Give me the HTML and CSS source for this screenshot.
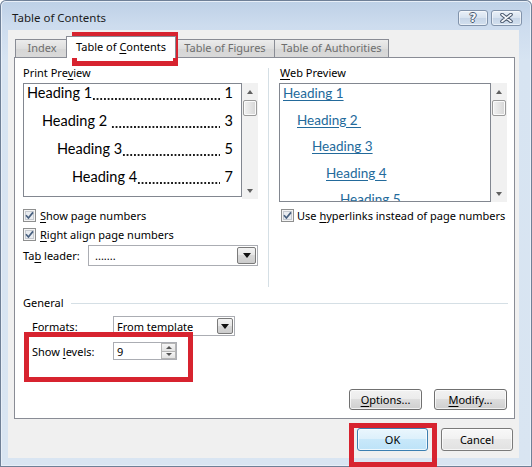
FILE: index.html
```html
<!DOCTYPE html>
<html>
<head>
<meta charset="utf-8">
<link rel="stylesheet" href="styles.css">
</head>
<body>
<div class="window">
  <div class="titlebar">
    <span class="title">Table of Contents</span>
    <div class="caption-btns">
      <div class="cbtn help"><span class="q">?</span></div>
      <div class="cbtn close">
        <svg width="13" height="10" viewBox="0 0 13 10"><path d="M2 1.5 L11 8.5 M11 1.5 L2 8.5" stroke="#46556b" stroke-width="3.6" stroke-linecap="round"/><path d="M2 1.5 L11 8.5 M11 1.5 L2 8.5" stroke="#f6f8fb" stroke-width="1.6" stroke-linecap="round"/></svg>
      </div>
    </div>
  </div>
  <div class="client">
    <div class="tabs">
      <div class="tab t-index">Index</div>
      <div class="tab active t-toc">Table of <u>C</u>ontents</div>
      <div class="tab t-fig">Table of Figures</div>
      <div class="tab t-auth">Table of Authorities</div>
    </div>
    <div class="panel">
      <div class="top">
        <div class="col-left">
          <div class="lbl">Print Pre<u>v</u>iew</div>
          <div class="pv-row">
            <div class="pbox print">
              <div class="toc-line"><span>Heading 1</span><span class="dots"></span><span class="num">1</span></div>
              <div class="toc-line i1"><span>Heading 2&nbsp;</span><span class="dots"></span><span class="num">3</span></div>
              <div class="toc-line i2"><span>Heading 3</span><span class="dots"></span><span class="num">5</span></div>
              <div class="toc-line i3"><span>Heading 4</span><span class="dots"></span><span class="num">7</span></div>
            </div>
            <div class="sbar s-print">
              <div class="sarrow"><span class="tri-up"></span></div>
              <div class="thumb"></div>
              <div class="sfill"></div>
              <div class="sarrow"><span class="tri-down"></span></div>
            </div>
          </div>
          <div class="chk first">
            <svg class="cb" width="13" height="13" viewBox="0 0 13 13"><rect x="0.5" y="0.5" width="12" height="12" fill="#f4f4f4" stroke="#8e8f8f"/><rect x="2.5" y="2.5" width="8" height="8" fill="#e9ecf0" stroke="#c5c9cf"/><path d="M3 6.3 L5.4 9 L10 3.4" fill="none" stroke="#48607f" stroke-width="1.7"/></svg>
            <span><u>S</u>how page numbers</span>
          </div>
          <div class="chk">
            <svg class="cb" width="13" height="13" viewBox="0 0 13 13"><rect x="0.5" y="0.5" width="12" height="12" fill="#f4f4f4" stroke="#8e8f8f"/><rect x="2.5" y="2.5" width="8" height="8" fill="#e9ecf0" stroke="#c5c9cf"/><path d="M3 6.3 L5.4 9 L10 3.4" fill="none" stroke="#48607f" stroke-width="1.7"/></svg>
            <span><u>R</u>ight align page numbers</span>
          </div>
          <div class="leader">
            <span class="leader-l">Ta<u>b</u> leader:</span>
            <div class="combo c-leader">
              <span>.......</span>
              <div class="drop"><span class="tri-down dark"></span></div>
            </div>
          </div>
        </div>
        <div class="vsep"></div>
        <div class="col-right">
          <div class="lbl"><u>W</u>eb Preview</div>
          <div class="pv-row">
            <div class="pbox web">
              <div class="web-line"><span class="lnk">Heading 1</span></div>
              <div class="web-line w1"><span class="lnk">Heading 2&nbsp;</span></div>
              <div class="web-line w2"><span class="lnk">Heading 3</span></div>
              <div class="web-line w3"><span class="lnk">Heading 4</span></div>
              <div class="web-line w4"><span class="lnk">Heading 5</span></div>
            </div>
            <div class="sbar s-web">
              <div class="sarrow"><span class="tri-up"></span></div>
              <div class="thumb"></div>
              <div class="sfill"></div>
              <div class="sarrow"><span class="tri-down"></span></div>
            </div>
          </div>
          <div class="chk first right">
            <svg class="cb" width="13" height="13" viewBox="0 0 13 13"><rect x="0.5" y="0.5" width="12" height="12" fill="#f4f4f4" stroke="#8e8f8f"/><rect x="2.5" y="2.5" width="8" height="8" fill="#e9ecf0" stroke="#c5c9cf"/><path d="M3 6.3 L5.4 9 L10 3.4" fill="none" stroke="#48607f" stroke-width="1.7"/></svg>
            <span>Use <u>h</u>yperlinks instead of page numbers</span>
          </div>
        </div>
      </div>
      <div class="general"><span>General</span><div class="gline"></div></div>
      <div class="frow">
        <span class="fl">Forma<u>t</u>s:</span>
        <div class="combo c-formats">
          <span>From template</span>
          <div class="drop"><span class="tri-down dark"></span></div>
        </div>
      </div>
      <div class="frow levels">
        <span class="fl">Show <u>l</u>evels:</span>
        <div class="spin">
          <span>9</span>
          <div class="spin-btns">
            <div class="sp"><span class="tri-up small"></span></div>
            <div class="sp"><span class="tri-down small"></span></div>
          </div>
        </div>
      </div>
      <div class="brow">
        <div class="btn"><span><u>O</u>ptions...</span></div>
        <div class="btn"><span><u>M</u>odify...</span></div>
      </div>
    </div>
    <div class="footer">
      <div class="btn ok">OK</div>
      <div class="btn cancel">Cancel</div>
    </div>
  </div>
  <div class="redbox r-tab"></div>
  <div class="redbox r-levels"></div>
  <div class="redbox r-ok"></div>
</div>
</body>
</html>
```
FILE: styles.css
```css
* { box-sizing: border-box; }
html, body { margin: 0; padding: 0; }
body {
  width: 532px;
  height: 467px;
  overflow: hidden;
  background: #ffffff;
  font-family: "Noto Sans", "DejaVu Sans", sans-serif;
  font-size: 11px;
  color: #000;
}
u { text-decoration: underline; text-underline-offset: 2px; }

.window {
  position: relative;
  width: 532px;
  height: 467px;
  background: linear-gradient(#bdd0e6 0px, #cddcee 26px, #d7e4f2 60px, #d9e5f2 100%);
  box-shadow: inset 0 0 0 1px #6f8097, inset 0 0 0 2px #e8eff8;
  border-radius: 6px 6px 0 0;
  display: flex;
  flex-direction: column;
  overflow: hidden;
}

.titlebar {
  height: 30px;
  display: flex;
  align-items: flex-start;
  padding: 0 10px 0 12px;
  flex-shrink: 0;
}
.title {
  flex: 1;
  margin-top: 10px;
  line-height: 16px;
  font-size: 11.5px;
  color: #1b1b1b;
}
.caption-btns {
  display: flex;
  gap: 3px;
  margin-top: 10px;
}
.cbtn {
  height: 16px;
  border: 1px solid #8193ab;
  border-radius: 3px;
  background: linear-gradient(#e9f0f8, #d7e2ef 50%, #c6d5e7 50%, #d2dfee);
  box-shadow: inset 0 0 0 1px rgba(255,255,255,0.55);
  display: flex;
  align-items: center;
  justify-content: center;
}
.help { width: 30px; }
.close { width: 31px; }
.q {
  font-family: "DejaVu Sans", sans-serif;
  font-weight: bold;
  font-size: 12px;
  line-height: 14px;
  color: #f5f7fa;
  text-shadow: 1px 0 0 #4b5a6f, -1px 0 0 #4b5a6f, 0 1px 0 #4b5a6f, 0 -1px 0 #4b5a6f;
}

.client {
  margin: 0 13px 0 8px;
  height: 428px;
  background: #f0f0f0;
  padding-top: 6px;
  flex-shrink: 0;
}

.tabs {
  display: flex;
  align-items: flex-end;
  height: 21px;
  margin-left: 7px;
}
.tab {
  height: 18px;
  border: 1px solid #898c95;
  border-bottom: none;
  background: linear-gradient(#ececec, #dedede 50%, #d6d6d6 50%, #d9d9d9);
  color: #6e6e6e;
  line-height: 16px;
  text-align: center;
  white-space: nowrap;
  margin-right: -1px;
}
.t-index { width: 54px; }
.t-toc { width: 110px; }
.t-fig { width: 100px; }
.t-auth { width: 115px; }
.tab.active {
  height: 22px;
  margin-bottom: -1px;
  margin-left: -2px;
  padding-top: 2px;
  background: #ffffff;
  color: #000;
  position: relative;
  z-index: 1;
}

.panel {
  margin: 0 4px 0 6px;
  height: 362px;
  border: 1px solid #898c95;
  background: #ffffff;
}

.top {
  display: flex;
  margin-left: 8px;
}
.col-left { width: 245px; }
.vsep {
  width: 1px;
  height: 219px;
  margin-top: 10px;
  background: #d5dfe5;
}
.col-right {
  width: 228px;
  margin-left: 10px;
}
.lbl {
  margin-top: 7px;
  height: 16px;
  line-height: 16px;
}
.col-right .lbl { padding-left: 1px; }

.pv-row {
  display: flex;
  margin-top: 2px;
}
.pbox {
  border: 1px solid #828790;
  background: #fff;
  overflow: hidden;
  display: flex;
  flex-direction: column;
  font-family: "Lato", "Noto Sans", sans-serif;
}
.print {
  width: 219px;
  height: 114px;
  padding: 0 8px 0 3px;
  gap: 10px;
  font-size: 14.5px;
}
.toc-line {
  display: flex;
  height: 18px;
  line-height: 18px;
  white-space: nowrap;
  flex-shrink: 0;
}
.toc-line.i1 { padding-left: 15px; }
.toc-line.i2 { padding-left: 30px; }
.toc-line.i3 { padding-left: 45px; }
.dots {
  flex: 1;
  margin-right: 5px;
  background-image: radial-gradient(circle, #1a1a1a 0.9px, transparent 1.25px);
  background-size: 3.7px 3.7px;
  background-repeat: repeat-x;
  background-position: left 0 top 12.6px;
}
.num { }

.web {
  width: 212px;
  height: 119px;
  padding-left: 3px;
  gap: 8.5px;
  font-size: 13.5px;
}
.web-line {
  height: 18px;
  line-height: 18px;
  white-space: nowrap;
  flex-shrink: 0;
}
.web-line.w1 { padding-left: 14px; }
.web-line.w2 { padding-left: 29px; }
.web-line.w3 { padding-left: 43px; }
.web-line.w4 { padding-left: 57px; }
.lnk {
  color: #236a9b;
  text-decoration: underline;
  text-underline-offset: 2px;
}

.sbar {
  width: 16px;
  background: #f1f1f1;
  display: flex;
  flex-direction: column;
  align-items: center;
}
.s-print { height: 116px; }
.s-web { height: 119px; }
.sarrow {
  width: 16px;
  height: 17px;
  display: flex;
  align-items: center;
  justify-content: center;
}
.thumb {
  width: 14px;
  height: 16px;
  border: 1px solid #9a9a9a;
  border-radius: 2px;
  background: linear-gradient(90deg, #f2f2f2, #e4e4e4 50%, #d6d6d6);
  box-shadow: inset 0 0 0 1px #fafafa;
}
.sfill { flex: 1; }

.tri-up, .tri-down {
  width: 0;
  height: 0;
  border-left: 3.5px solid transparent;
  border-right: 3.5px solid transparent;
}
.tri-up { border-bottom: 4px solid #606060; }
.tri-down { border-top: 4px solid #606060; }
.tri-down.dark { border-top-color: #111; border-left-width: 4px; border-right-width: 4px; border-top-width: 5px; }
.tri-up.small { border-bottom: 3px solid #555; border-left-width: 3px; border-right-width: 3px; }
.tri-down.small { border-top: 3px solid #555; border-left-width: 3px; border-right-width: 3px; }

.chk {
  display: flex;
  align-items: center;
  gap: 4px;
  height: 18px;
  margin-top: 1px;
  white-space: nowrap;
}
.chk.first { margin-top: 7px; }
.chk.right { margin-top: 4px; margin-left: 2px; gap: 3px; }
.cb { flex-shrink: 0; }

.leader {
  display: flex;
  align-items: center;
  margin-top: 2px;
}
.leader-l { width: 65px; }
.combo {
  height: 21px;
  border: 1px solid #abadb3;
  background: #fff;
  display: flex;
  align-items: center;
  justify-content: space-between;
  padding: 0 1px 0 6px;
}
.c-leader { width: 170px; }
.c-formats { width: 122px; height: 20px; padding-left: 3px; }
.drop {
  width: 19px;
  height: 17px;
  border: 1px solid #7a7a7a;
  border-radius: 2px;
  background: linear-gradient(#f3f3f3, #e6e6e6 50%, #d8d8d8 50%, #cccccc);
  display: flex;
  align-items: center;
  justify-content: center;
}
.c-formats .drop { width: 16px; height: 16px; }

.general {
  display: flex;
  align-items: center;
  margin: 8px 6px 0 8px;
  height: 16px;
  line-height: 16px;
}
.gline {
  flex: 1;
  height: 1px;
  margin-left: 7px;
  background: #d5dfe5;
}

.frow {
  display: flex;
  align-items: center;
  margin: 5px 0 0 17px;
  height: 20px;
}
.frow.levels { margin-top: 6px; height: 18px; }
.fl { width: 81px; }

.spin {
  width: 64px;
  height: 18px;
  border: 1px solid #abadb3;
  background: #fff;
  display: flex;
  align-items: center;
  justify-content: space-between;
  padding: 0 0 0 3px;
}
.spin-btns {
  width: 15px;
  height: 16px;
  display: flex;
  flex-direction: column;
}
.sp {
  flex: 1;
  border: 1px solid #b5b5b5;
  background: linear-gradient(#f6f6f6, #e2e2e2);
  display: flex;
  align-items: center;
  justify-content: center;
}
.sp + .sp { border-top: none; }

.brow {
  display: flex;
  justify-content: flex-end;
  gap: 12px;
  margin: 29px 7px 0 0;
}
.btn {
  width: 73px;
  height: 21px;
  border: 1px solid #707070;
  border-radius: 3px;
  background: linear-gradient(#f2f2f2, #ebebeb 50%, #dddddd 50%, #cfcfcf);
  box-shadow: inset 0 0 0 1px rgba(255,255,255,0.7);
  display: flex;
  align-items: center;
  justify-content: center;
  line-height: 16px;
  white-space: nowrap;
}

.footer {
  display: flex;
  justify-content: flex-end;
  gap: 13px;
  margin: 9px 6px 0 0;
}
.btn.ok {
  width: 71px;
  height: 23px;
  border-color: #3c7fb1;
  background: linear-gradient(#eaf6fd, #dcf0fb 50%, #c8e8fa 50%, #bde3f8);
  box-shadow: inset 0 0 0 1px rgba(255,255,255,0.75);
}
.btn.cancel {
  width: 72px;
  height: 23px;
  border-color: #7a7a7a;
  background: linear-gradient(#f8f8f8, #f1f1f1 50%, #e8e8e8 50%, #e2e2e2);
}

.redbox {
  position: absolute;
  border: 5px solid #d7232f;
}
.r-tab { left: 72px; top: 32px; width: 106px; height: 34px; }
.r-levels { left: 24px; top: 332px; width: 169px; height: 50px; }
.r-ok { left: 349px; top: 423px; width: 88px; height: 44px; }
```
